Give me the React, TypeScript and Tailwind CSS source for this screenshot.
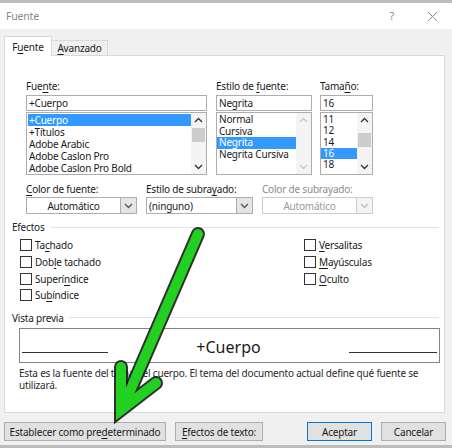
import React from "react";

const U = ({ children }: { children: React.ReactNode }) => (
  <span className="underline underline-offset-[2px] decoration-[1px]">{children}</span>
);

const Up = ({ c = "#333" }: { c?: string }) => (
  <svg width="9" height="6" viewBox="0 0 9 6"><polyline points="1,5 4.5,1.5 8,5" fill="none" stroke={c} strokeWidth="1.3" /></svg>
);
const Down = ({ c = "#333" }: { c?: string }) => (
  <svg width="9" height="6" viewBox="0 0 9 6"><polyline points="1,1 4.5,4.5 8,1" fill="none" stroke={c} strokeWidth="1.3" /></svg>
);

function ScrollBar({ thumbTop, thumbH, disabled }: { thumbTop?: number; thumbH?: number; disabled?: boolean }) {
  const c = disabled ? "#c8c8c8" : "#333";
  return (
    <div className="relative w-[15px] h-full bg-[#f4f4f4] flex flex-col items-center justify-between py-[4px]">
      <Up c={c} />
      {thumbTop !== undefined && (
        <div className="absolute left-[1px] w-[13px] bg-[#cdcdcd]" style={{ top: thumbTop, height: thumbH }} />
      )}
      <Down c={c} />
    </div>
  );
}

function Check({ children }: { children: React.ReactNode }) {
  return (
    <div className="flex items-center h-[16.7px]">
      <div className="w-[12px] h-[12px] border border-[#333] bg-white mr-[3px]" />
      <span>{children}</span>
    </div>
  );
}

function Combo({ w, text, center, disabled }: { w: number; text: string; center?: boolean; disabled?: boolean }) {
  return (
    <div className={`flex h-[17px] border ${disabled ? "border-[#cccccc]" : "border-[#adadad]"} bg-white`} style={{ width: w }}>
      <div className={`flex-1 flex items-center ${center ? "justify-center" : "pl-[2px]"} ${disabled ? "text-[#9a9a9a]" : ""}`}>{text}</div>
      <div className={`w-[16px] flex items-center justify-center border-l ${disabled ? "border-[#cccccc] bg-[#f4f4f4]" : "border-[#adadad] bg-[#e5e5e5]"}`}>
        <Down c={disabled ? "#bdbdbd" : "#555"} />
      </div>
    </div>
  );
}

export default function App() {
  return (
    <div className="relative w-[452px] h-[448px] overflow-hidden bg-[#f0f0f0] text-[10px] tracking-[-0.2px] text-[#1a1a1a] leading-[12px] whitespace-nowrap" style={{ fontFamily: '"Noto Sans", "Open Sans", sans-serif' }}>
      <div className="h-[3px] bg-[#bcbcbc]" />
      {/* title bar */}
      <div className="h-[26px] bg-white flex items-center pl-[6px] pr-[14px]">
        <span className="text-[#8a8a8a] text-[10.5px]">Fuente</span>
        <span className="ml-auto text-[#8a8a8a] text-[11px] mr-[33px]">?</span>
        <svg width="11" height="11" viewBox="0 0 11 11"><path d="M1,1 L10,10 M10,1 L1,10" stroke="#8a8a8a" strokeWidth="1" /></svg>
      </div>
      {/* tabs */}
      <div className="flex items-end pl-[4px] h-[26px]">
        <div className="relative z-10 w-[48px] h-[20px] -mb-[1px] bg-white border border-b-0 border-[#d9d9d9] flex items-center justify-center">
          <span>F<U>u</U>ente</span>
        </div>
        <div className="w-[56px] h-[15px] bg-[#f0f0f0] border border-b-0 border-l-0 border-[#d9d9d9] flex items-center justify-center">
          <span><U>A</U>vanzado</span>
        </div>
      </div>
      {/* panel */}
      <div className="ml-[4px] w-[441px] h-[358px] bg-white border border-[#d9d9d9] flex flex-col">
        <div className="flex pl-[21px] pt-[24px]">
          <div className="w-[181px] flex flex-col">
            <div className="h-[15px]">Fue<U>n</U>te:</div>
            <div className="h-[16px] border border-[#abadb3] flex items-center pl-[2px]">+Cuerpo</div>
            <div className="mt-[1px] h-[63px] border border-[#abadb3] flex">
              <div className="flex-1 flex flex-col pt-[1px] pl-[1px]">
                <div className="h-[12px] bg-[#3399ff] text-white pl-[1px]">+Cuerpo</div>
                <div className="h-[12px] pl-[1px]">+Títulos</div>
                <div className="h-[12px] pl-[1px]">Adobe Arabic</div>
                <div className="h-[12px] pl-[1px]">Adobe Caslon Pro</div>
                <div className="h-[12px] pl-[1px]">Adobe Caslon Pro Bold</div>
              </div>
              <ScrollBar thumbTop={15} thumbH={14} />
            </div>
          </div>
          <div className="w-[96px] ml-[9px] flex flex-col">
            <div className="h-[15px]">Estilo de <U>f</U>uente:</div>
            <div className="h-[16px] border border-[#abadb3] flex items-center pl-[2px]">Negrita</div>
            <div className="mt-[1px] h-[63px] border border-[#abadb3] flex">
              <div className="flex-1 flex flex-col pt-[1px] leading-[11.5px]">
                <div className="h-[11.5px] pl-[2px]">Normal</div>
                <div className="h-[11.5px] pl-[2px]">Cursiva</div>
                <div className="h-[11.5px] pl-[2px] bg-[#3399ff] text-white">Negrita</div>
                <div className="h-[11.5px] pl-[2px]">Negrita Cursiva</div>
              </div>
              <ScrollBar disabled />
            </div>
          </div>
          <div className="w-[53px] ml-[8px] flex flex-col">
            <div className="h-[15px]">Tama<U>ñ</U>o:</div>
            <div className="h-[16px] border border-[#abadb3] flex items-center pl-[2px]">16</div>
            <div className="mt-[1px] h-[63px] border border-[#abadb3] flex">
              <div className="flex-1 flex flex-col pt-[1px] leading-[11.3px]">
                <div className="h-[11.3px] pl-[2px]">11</div>
                <div className="h-[11.3px] pl-[2px]">12</div>
                <div className="h-[11.3px] pl-[2px]">14</div>
                <div className="h-[11.3px] pl-[2px] bg-[#3399ff] text-white">16</div>
                <div className="h-[11.3px] pl-[2px]">18</div>
              </div>
              <ScrollBar thumbTop={20} thumbH={14} />
            </div>
          </div>
        </div>
        {/* row 2 */}
        <div className="flex pl-[21px] mt-[8px]">
          <div className="w-[111px] flex flex-col">
            <div className="h-[14px]"><U>C</U>olor de fuente:</div>
            <Combo w={111} text="Automático" center />
          </div>
          <div className="w-[107px] ml-[9px] flex flex-col">
            <div className="h-[14px]">Estilo de subra<U>y</U>ado:</div>
            <Combo w={107} text="(ninguno)" />
          </div>
          <div className="w-[111px] ml-[9px] flex flex-col">
            <div className="h-[14px] text-[#8c8c8c]">Color de subrayado:</div>
            <Combo w={111} text="Automático" center disabled />
          </div>
        </div>
        {/* Efectos */}
        <div className="flex items-center pl-[7px] pr-[5px] mt-[6px] h-[14px]">
          <span>Efectos</span>
          <div className="flex-1 h-px bg-[#e3e3e3] ml-[5px]" />
        </div>
        <div className="flex mt-[3px]">
          <div className="pl-[15px] w-[299px] flex flex-col">
            <Check>Ta<U>c</U>hado</Check>
            <Check>Dob<U>l</U>e tachado</Check>
            <Check>Superí<U>n</U>dice</Check>
            <Check>Su<U>b</U>índice</Check>
          </div>
          <div className="flex flex-col">
            <Check><U>V</U>ersalitas</Check>
            <Check><U>M</U>ayúsculas</Check>
            <Check><U>O</U>culto</Check>
          </div>
        </div>
        {/* Vista previa */}
        <div className="flex items-center pl-[7px] pr-[5px] mt-[7px] h-[14px]">
          <span>Vista previa</span>
          <div className="flex-1 h-px bg-[#e3e3e3] ml-[5px]" />
        </div>
        <div className="ml-[14px] mt-[3px] w-[421px] h-[35px] border border-[#828282] flex items-end pb-[9px] px-[2px]">
          <div className="w-[86px] h-px bg-[#333]" />
          <div className="flex-1 text-center text-[16px] leading-[18px] tracking-normal relative top-[3px]">+Cuerpo</div>
          <div className="w-[88px] h-px bg-[#333]" />
        </div>
        <div className="ml-[14px] mt-[4px] leading-[12px] text-[#2a2a2a]">
          Esta es la fuente del tema del cuerpo. El tema del documento actual define qué fuente se
          <br />
          utilizará.
        </div>
      </div>
      {/* buttons */}
      <div className="flex mt-[9px] pl-[4px]">
        <div className="w-[162px] h-[19px] bg-[#e1e1e1] border border-[#adadad] flex items-center justify-center">
          <span>Establecer como pre<U>d</U>eterminado</span>
        </div>
        <div className="ml-[9px] w-[88px] h-[19px] bg-[#e1e1e1] border border-[#adadad] flex items-center justify-center">
          <span><U>E</U>fectos de texto:</span>
        </div>
        <div className="ml-[44px] w-[65px] h-[19px] bg-[#e1e1e1] border border-[#0078d7] flex items-center justify-center">
          Aceptar
        </div>
        <div className="ml-[9px] w-[65px] h-[19px] bg-[#e1e1e1] border border-[#adadad] flex items-center justify-center">
          Cancelar
        </div>
      </div>
      <div className="absolute left-0 right-0 bottom-0 h-[3px] bg-[#bcbcbc]" />
      {/* green arrow overlay */}
      <svg className="absolute left-0 top-0 pointer-events-none" width="452" height="448" viewBox="0 0 452 448">
        <g fill="none" strokeLinecap="round" strokeLinejoin="miter">
          <path d="M198,234 L127,398" stroke="#1a1a1a" strokeWidth="14" opacity="0.9" />
          <path d="M121,367 L121,410 L156,383" stroke="#1a1a1a" strokeWidth="14" opacity="0.9" />
          <path d="M198,234 L127,398" stroke="#22d022" strokeWidth="10" />
          <path d="M121,367 L121,410 L156,383" stroke="#22d022" strokeWidth="10" />
        </g>
      </svg>
    </div>
  );
}
